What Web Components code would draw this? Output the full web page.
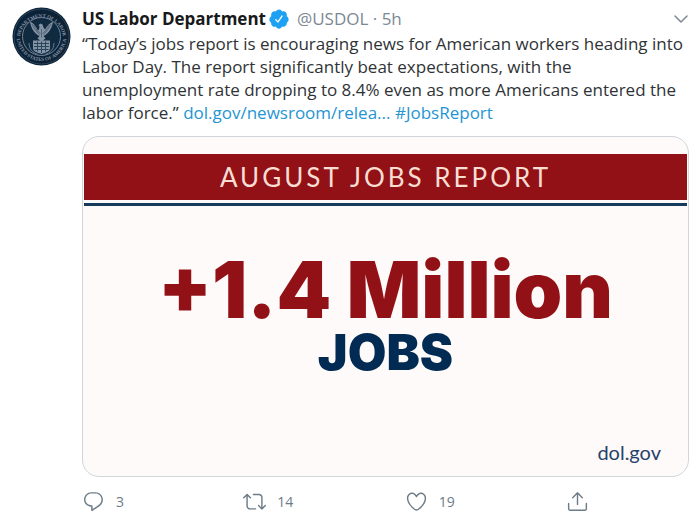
<!DOCTYPE html>
<html lang="en">
<head>
<meta charset="utf-8">
<meta name="viewport" content="width=device-width, initial-scale=1">
<title>US Labor Department</title>
<style>
    body {
        margin: 0;
        background: #FFF;
        color: #303336;
        font: 17px/23px "Open Sans", "Noto Sans", sans-serif;
    }
</style>
</head>
<body>
<tweet-post>
    <labor-seal slot="avatar"></labor-seal>
    <tweet-header slot="header" handle="@USDOL" time="5h">US Labor Department</tweet-header>
    “Today’s jobs report is encouraging news for American workers heading into Labor Day. The report significantly beat expectations, with the unemployment rate dropping to 8.4% even as more Americans entered the labor force.” <tweet-link href="#newsroom">dol.gov/newsroom/relea...</tweet-link> <tweet-link href="#JobsReport">#JobsReport</tweet-link>
    <report-card slot="media">
        <span slot="banner">AUGUST JOBS REPORT</span>
        <span slot="figure">+1.4 Million</span>
        <span slot="unit">JOBS</span>
        <span slot="source">dol.gov</span>
    </report-card>
    <tweet-action slot="actions" icon="reply" label="Reply">3</tweet-action>
    <tweet-action slot="actions" icon="retweet" label="Retweet">14</tweet-action>
    <tweet-action slot="actions" icon="like" label="Like">19</tweet-action>
    <tweet-action slot="actions" icon="share" label="Share"></tweet-action>
</tweet-post>

<script>
function createTemplate(html) {
    const template = document.createElement('template');
    template.innerHTML = html;
    return template;
}

const postTemplate = createTemplate(`
    <style>
        :host {
            display: block;
            padding: 7px 11px 7px 12px;
        }

        article {
            display: flex;
            align-items: flex-start;
            gap: 11px;
        }

        .content {
            flex: 1;
            min-width: 0;
        }

        p {
            margin: 0 0 12px;
        }

        .actions {
            display: flex;
            margin: 13px 100px 0 0;
        }

        ::slotted(tweet-action) {
            flex: 1 1 0;
        }

        ::slotted(tweet-action:last-of-type) {
            flex: none;
        }
    </style>
    <article>
        <slot name="avatar"></slot>
        <div class="content">
            <slot name="header"></slot>
            <p><slot></slot></p>
            <slot name="media"></slot>
            <div class="actions"><slot name="actions"></slot></div>
        </div>
    </article>
`);

class TweetPost extends HTMLElement {
    constructor() {
        super();
        this.attachShadow({ mode: 'open' });
        this.shadowRoot.appendChild(postTemplate.content.cloneNode(true));
    }
}

const sealTemplate = createTemplate(`
    <style>
        :host {
            display: block;
            flex: none;
            width: 59px;
            height: 59px;
        }

        svg {
            display: block;
            width: 100%;
            height: 100%;
        }

        text {
            font: bold 10px "Liberation Serif", serif;
            fill: #8795A6;
        }
    </style>
    <svg viewBox="0 0 118 118" role="img" aria-label="Department of Labor seal">
        <defs>
            <path id="upper" d="M16 64a43 43 0 1 1 86 0"/>
            <path id="lower" d="M9 58a50 50 0 0 0 100 0"/>
        </defs>
        <circle cx="59" cy="59" r="58" fill="#0B2237"/>
        <circle cx="59" cy="59" r="55" fill="none" stroke="#4C6076" stroke-width="1"/>
        <circle cx="59" cy="59" r="38" fill="#102B40" stroke="#71849A" stroke-width="2"/>
        <text><textPath href="#upper" startOffset="50%" text-anchor="middle">DEPARTMENT OF LABOR</textPath></text>
        <text><textPath href="#lower" startOffset="50%" text-anchor="middle">UNITED STATES OF AMERICA</textPath></text>
        <g fill="#8493A3">
            <path d="M36 29c2 13 8 24 19 29l-4 5 8 6 8-6-4-5c11-5 17-16 19-29-7 3-12 9-16 16l-3-4-2-6-4-2-4 3 2 3-1 6-2 2c-4-8-9-15-16-18z"/>
            <path d="M42 67h34v15c0 6-5 8-17 12-12-4-17-6-17-12z"/>
        </g>
        <path d="M40 34c4 9 9 15 15 21M44 36c4 8 7 13 13 17M78 34c-4 9-9 15-15 21M74 36c-4 8-7 13-13 17M59 44v17" fill="none" stroke="#1A3449" stroke-width="1"/>
        <path d="M44 73h30M44 79h30M45 85h28M51 69v20M59 69v23M67 69v20" fill="none" stroke="#28445B" stroke-width="2"/>
        <path d="M34 72c0 12 8 20 18 23M84 72c0 12-8 20-18 23" fill="none" stroke="#64798D" stroke-width="2"/>
    </svg>
`);

class LaborSeal extends HTMLElement {
    constructor() {
        super();
        this.attachShadow({ mode: 'open' });
        this.shadowRoot.appendChild(sealTemplate.content.cloneNode(true));
    }
}

const headerTemplate = createTemplate(`
    <style>
        :host {
            display: flex;
            align-items: center;
            height: 25px;
            padding-bottom: 2px;
            box-sizing: border-box;
            color: #7B8894;
        }

        b {
            color: #17191B;
            font-weight: 700;
        }

        .badge {
            width: 22px;
            height: 22px;
            margin: 0 7px 0 2px;
            fill: #1DA1F2;
        }

        button {
            display: flex;
            margin: 0 0 0 auto;
            padding: 0;
            border: 0;
            background: none;
            color: inherit;
            cursor: pointer;
        }
    </style>
    <b><slot></slot></b>
    <svg class="badge" viewBox="0 0 24 24" role="img" aria-label="Verified account"><path d="M22.5 12.5c0-1.58-.875-2.95-2.148-3.6.154-.435.238-.905.238-1.4 0-2.21-1.71-3.998-3.818-3.998-.47 0-.92.084-1.336.25C14.818 2.415 13.51 1.5 12 1.5s-2.816.917-3.437 2.25c-.415-.165-.866-.25-1.336-.25-2.11 0-3.818 1.79-3.818 4 0 .494.083.964.237 1.4-1.272.65-2.147 2.018-2.147 3.6 0 1.495.782 2.798 1.942 3.486-.02.17-.032.34-.032.514 0 2.21 1.708 4 3.818 4 .47 0 .92-.086 1.335-.25.62 1.334 1.926 2.25 3.437 2.25 1.512 0 2.818-.916 3.437-2.25.415.163.865.248 1.336.248 2.11 0 3.818-1.79 3.818-4 0-.174-.012-.344-.033-.513 1.158-.687 1.943-1.99 1.943-3.484zm-6.616-3.334l-4.334 6.5c-.145.217-.382.334-.625.334-.143 0-.288-.04-.416-.126l-.115-.094-2.415-2.415c-.293-.293-.293-.768 0-1.06s.768-.294 1.06 0l1.77 1.767 3.825-5.74c.23-.345.696-.436 1.04-.207.346.23.44.696.21 1.04z"/></svg>
    <span id="meta"></span>
    <button type="button" aria-label="More">
        <svg width="17" height="17" viewBox="0 0 17 17" fill="none" stroke="currentColor" stroke-width="1.5" stroke-linecap="round" stroke-linejoin="round"><path d="M3 6l6 6 6-6"/></svg>
    </button>
`);

class TweetHeader extends HTMLElement {
    constructor() {
        super();
        this.attachShadow({ mode: 'open' });
        this.shadowRoot.appendChild(headerTemplate.content.cloneNode(true));
        this.$meta = this.shadowRoot.querySelector('#meta');
    }

    connectedCallback() {
        this.$meta.textContent = `${this.getAttribute('handle')} · ${this.getAttribute('time')}`;
    }
}

const linkTemplate = createTemplate(`
    <style>
        :host {
            display: inline;
        }

        a {
            color: #2595D3;
            text-decoration: none;
        }

        a:hover {
            text-decoration: underline;
        }
    </style>
    <a><slot></slot></a>
`);

class TweetLink extends HTMLElement {
    constructor() {
        super();
        this.attachShadow({ mode: 'open' });
        this.shadowRoot.appendChild(linkTemplate.content.cloneNode(true));
    }

    connectedCallback() {
        this.shadowRoot.querySelector('a').href = this.getAttribute('href');
    }
}

const cardTemplate = createTemplate(`
    <style>
        :host {
            display: flex;
            flex-direction: column;
            aspect-ratio: 16 / 9;
            box-sizing: border-box;
            padding-top: 17px;
            border: 1px solid #CFD6DA;
            border-radius: 17px;
            background: #FEFAF9;
            overflow: hidden;
            text-align: center;
            color: #022B54;
        }

        .banner {
            margin: 0 1px;
            background: #921116;
            color: #F8DDD2;
            font: 26px/46px Lato, sans-serif;
            letter-spacing: 3px;
        }

        .rule {
            height: 3px;
            margin: 3px 1px 0;
            background: #163A5C;
        }

        .figure {
            margin-top: 44px;
            color: #921116;
            font: 900 78px/80px Inter, sans-serif;
        }

        .unit {
            font: 900 50px/44px Inter, sans-serif;
        }

        .source {
            margin: auto 27px 12px;
            color: #28436B;
            text-align: right;
            font: 20px/24px Lato, sans-serif;
        }
    </style>
    <div class="banner"><slot name="banner"></slot></div>
    <div class="rule"></div>
    <div class="figure"><slot name="figure"></slot></div>
    <div class="unit"><slot name="unit"></slot></div>
    <div class="source"><slot name="source"></slot></div>
`);

class ReportCard extends HTMLElement {
    constructor() {
        super();
        this.attachShadow({ mode: 'open' });
        this.shadowRoot.appendChild(cardTemplate.content.cloneNode(true));
    }
}

const ICONS = {
    reply: 'M14.046 2.242l-4.148-.01h-.002c-4.374 0-7.8 3.427-7.8 7.802 0 4.098 3.186 7.206 7.465 7.37v3.828c0 .108.044.286.12.403.142.225.384.347.632.347.138 0 .277-.038.402-.118.264-.168 6.473-4.14 8.088-5.506 1.902-1.61 3.04-3.97 3.043-6.312v-.017c-.006-4.367-3.43-7.787-7.8-7.788zm3.787 12.972c-1.134.96-4.862 3.405-6.772 4.643V16.67c0-.414-.335-.75-.75-.75h-.396c-3.66 0-6.318-2.476-6.318-5.886 0-3.534 2.768-6.302 6.3-6.302l4.147.01h.002c3.532 0 6.3 2.766 6.302 6.296-.003 1.91-.942 3.844-2.514 5.176z',
    retweet: 'M23.77 15.67c-.292-.293-.767-.293-1.06 0l-2.22 2.22V7.65c0-2.068-1.683-3.75-3.75-3.75h-5.85c-.414 0-.75.336-.75.75s.336.75.75.75h5.85c1.24 0 2.25 1.01 2.25 2.25v10.24l-2.22-2.22c-.293-.293-.768-.293-1.06 0s-.294.768 0 1.06l3.5 3.5c.145.147.337.22.53.22s.383-.072.53-.22l3.5-3.5c.294-.292.294-.767 0-1.06zm-10.66 3.28H7.26c-1.24 0-2.25-1.01-2.25-2.25V6.46l2.22 2.22c.148.147.34.22.532.22s.384-.073.53-.22c.293-.293.293-.768 0-1.06l-3.5-3.5c-.293-.294-.768-.294-1.06 0l-3.5 3.5c-.294.292-.294.767 0 1.06s.767.293 1.06 0l2.22-2.22V16.7c0 2.068 1.683 3.75 3.75 3.75h5.85c.414 0 .75-.336.75-.75s-.337-.75-.75-.75z',
    like: 'M12 21.638h-.014C9.403 21.59 1.95 14.856 1.95 8.478c0-3.064 2.525-5.754 5.403-5.754 2.29 0 3.83 1.58 4.646 2.73.814-1.148 2.354-2.73 4.645-2.73 2.88 0 5.404 2.69 5.404 5.755 0 6.376-7.454 13.11-10.037 13.157H12zM7.354 4.225c-2.08 0-3.903 1.988-3.903 4.255 0 5.74 7.034 11.596 8.55 11.658 1.518-.062 8.55-5.917 8.55-11.658 0-2.267-1.823-4.255-3.903-4.255-2.528 0-3.94 2.936-3.952 2.965-.23.562-1.156.562-1.387 0-.014-.03-1.425-2.965-3.954-2.965z',
    share: 'M17.53 7.47l-5-5c-.293-.293-.768-.293-1.06 0l-5 5c-.294.293-.294.768 0 1.06s.767.294 1.06 0l3.72-3.72V15c0 .414.336.75.75.75s.75-.336.75-.75V4.81l3.72 3.72c.146.147.338.22.53.22s.384-.072.53-.22c.293-.293.293-.767 0-1.06zM19.708 21.944H4.292C3.028 21.944 2 20.916 2 19.652V14c0-.414.336-.75.75-.75s.75.336.75.75v5.652c0 .437.355.792.792.792h15.416c.437 0 .792-.355.792-.792V14c0-.414.336-.75.75-.75s.75.336.75.75v5.652c0 1.264-1.028 2.292-2.292 2.292z'
};

const actionTemplate = createTemplate(`
    <style>
        :host {
            display: block;
            color: #6D7C88;
        }

        button {
            display: flex;
            align-items: center;
            gap: 11px;
            padding: 0;
            border: 0;
            background: none;
            color: inherit;
            font: inherit;
            font-size: 14px;
            cursor: pointer;
        }

        svg {
            width: 23px;
            height: 23px;
            fill: currentColor;
        }
    </style>
    <button type="button">
        <svg viewBox="0 0 24 24" aria-hidden="true"><path/></svg>
        <slot></slot>
    </button>
`);

class TweetAction extends HTMLElement {
    constructor() {
        super();
        this.attachShadow({ mode: 'open' });
        this.shadowRoot.appendChild(actionTemplate.content.cloneNode(true));
    }

    connectedCallback() {
        this.shadowRoot.querySelector('path').setAttribute('d', ICONS[this.getAttribute('icon')]);
        this.shadowRoot.querySelector('button').setAttribute('aria-label', `${this.getAttribute('label')} ${this.textContent}`.trim());
    }
}

window.customElements.define('tweet-post', TweetPost);
window.customElements.define('labor-seal', LaborSeal);
window.customElements.define('tweet-header', TweetHeader);
window.customElements.define('tweet-link', TweetLink);
window.customElements.define('report-card', ReportCard);
window.customElements.define('tweet-action', TweetAction);
</script>
</body>
</html>
